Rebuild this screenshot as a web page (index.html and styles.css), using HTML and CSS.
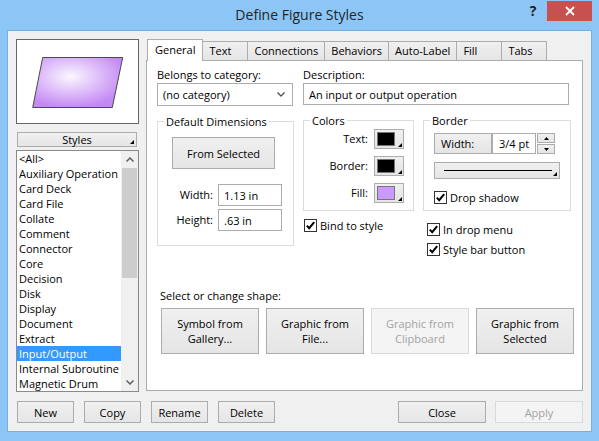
FILE: index.html
```html
<!DOCTYPE html>
<html lang="en">
<head>
    <meta charset="UTF-8">
    <title>Define Figure Styles</title>
    <link rel="stylesheet" href="styles.css">
</head>
<body>
<div class="window">
    <div class="titlebar">
        <span class="title">Define Figure Styles</span>
        <span class="help-btn">?</span>
        <span class="close-btn">
            <svg width="10" height="10" viewBox="0 0 10 10"><path d="M1 1 L9 9 M9 1 L1 9" stroke="#fff" stroke-width="1.8"/></svg>
        </span>
    </div>

    <div class="client">
        <div class="main">
            <!-- left column: preview + style list -->
            <div class="left-panel">
                <div class="preview">
                    <svg width="121" height="83" viewBox="0 0 121 83">
                        <defs>
                            <radialGradient id="io-fill" cx="0.42" cy="0.38" r="0.62">
                                <stop offset="0" stop-color="#fbf7ff"/>
                                <stop offset="1" stop-color="#c48af4"/>
                            </radialGradient>
                        </defs>
                        <polygon points="25.7,17.5 105.7,17.5 95.3,67.5 15.7,67.5" fill="url(#io-fill)" stroke="#4a4a4a" stroke-width="1"/>
                    </svg>
                </div>
                <div class="styles-btn">Styles<span class="corner"></span></div>
                <div class="style-list">
                    <ul class="items">
                        <li>&lt;All&gt;</li>
                        <li>Auxiliary Operation</li>
                        <li>Card Deck</li>
                        <li>Card File</li>
                        <li>Collate</li>
                        <li>Comment</li>
                        <li>Connector</li>
                        <li>Core</li>
                        <li>Decision</li>
                        <li>Disk</li>
                        <li>Display</li>
                        <li>Document</li>
                        <li>Extract</li>
                        <li class="selected">Input/Output</li>
                        <li>Internal Subroutine</li>
                        <li>Magnetic Drum</li>
                    </ul>
                    <div class="scrollbar">
                        <div class="arrow"><svg width="8" height="5" viewBox="0 0 8 5"><polyline points="0.5,4.5 4,1 7.5,4.5" fill="none" stroke="#606060" stroke-width="1.5"/></svg></div>
                        <div class="track"><div class="thumb"></div></div>
                        <div class="arrow"><svg width="8" height="5" viewBox="0 0 8 5"><polyline points="0.5,0.5 4,4 7.5,0.5" fill="none" stroke="#606060" stroke-width="1.5"/></svg></div>
                    </div>
                </div>
            </div>

            <!-- right column: tab control -->
            <div class="tabs">
                <div class="tab-strip">
                    <span class="tab active">General</span>
                    <span class="tab">Text</span>
                    <span class="tab">Connections</span>
                    <span class="tab">Behaviors</span>
                    <span class="tab">Auto-Label</span>
                    <span class="tab">Fill</span>
                    <span class="tab">Tabs</span>
                </div>
                <div class="tab-page">
                    <div class="field-row">
                        <div class="field cat">
                            <div class="field-label">Belongs to category:</div>
                            <div class="select">(no category)
                                <svg width="8" height="5" viewBox="0 0 8 5"><polyline points="0.5,0.5 4,4 7.5,0.5" fill="none" stroke="#555" stroke-width="1.4"/></svg>
                            </div>
                        </div>
                        <div class="field desc">
                            <div class="field-label">Description:</div>
                            <div class="text-input">An input or output operation</div>
                        </div>
                    </div>

                    <div class="groups-row">
                        <div class="col dims-col">
                            <div class="group dims">
                                <div class="group-title">Default Dimensions</div>
                                <div class="button from-selected">From Selected</div>
                                <div class="dim-grid">
                                    <span class="dim-label">Width:</span>
                                    <span class="text-input small">1.13 in</span>
                                    <span class="dim-label">Height:</span>
                                    <span class="text-input small">.63 in</span>
                                </div>
                            </div>
                        </div>

                        <div class="col colors-col">
                            <div class="group colors">
                                <div class="group-title">Colors</div>
                                <div class="color-grid">
                                    <span class="color-label">Text:</span>
                                    <span class="swatch-btn"><span class="swatch black"></span><span class="corner"></span></span>
                                    <span class="color-label">Border:</span>
                                    <span class="swatch-btn"><span class="swatch black"></span><span class="corner"></span></span>
                                    <span class="color-label">Fill:</span>
                                    <span class="swatch-btn"><span class="swatch lilac"></span><span class="corner"></span></span>
                                </div>
                            </div>
                            <label class="check bind">
                                <span class="box"><svg width="11" height="11" viewBox="0 0 11 11"><polyline points="1.8,5.6 4.2,8.2 9.2,2.2" fill="none" stroke="#000" stroke-width="2"/></svg></span>
                                Bind to style
                            </label>
                        </div>

                        <div class="col border-col">
                            <div class="group border">
                                <div class="group-title">Border</div>
                                <div class="width-row">
                                    <span class="button width-btn">Width:</span>
                                    <span class="text-input pt">3/4 pt</span>
                                    <span class="spinner">
                                        <span class="spin"><svg width="5" height="3" viewBox="0 0 5 3"><polygon points="0,3 2.5,0 5,3" fill="#000"/></svg></span>
                                        <span class="spin"><svg width="5" height="3" viewBox="0 0 5 3"><polygon points="0,0 2.5,3 5,0" fill="#000"/></svg></span>
                                    </span>
                                </div>
                                <div class="line-select"><span class="line"></span><span class="corner"></span></div>
                                <label class="check shadow">
                                    <span class="box"><svg width="11" height="11" viewBox="0 0 11 11"><polyline points="1.8,5.6 4.2,8.2 9.2,2.2" fill="none" stroke="#000" stroke-width="2"/></svg></span>
                                    Drop shadow
                                </label>
                            </div>
                            <label class="check menu">
                                <span class="box"><svg width="11" height="11" viewBox="0 0 11 11"><polyline points="1.8,5.6 4.2,8.2 9.2,2.2" fill="none" stroke="#000" stroke-width="2"/></svg></span>
                                In drop menu
                            </label>
                            <label class="check barbtn">
                                <span class="box"><svg width="11" height="11" viewBox="0 0 11 11"><polyline points="1.8,5.6 4.2,8.2 9.2,2.2" fill="none" stroke="#000" stroke-width="2"/></svg></span>
                                Style bar button
                            </label>
                        </div>
                    </div>

                    <div class="shape-label">Select or change shape:</div>
                    <div class="shape-buttons">
                        <span class="button shape-btn">Symbol from<br>Gallery...</span>
                        <span class="button shape-btn">Graphic from<br>File...</span>
                        <span class="button shape-btn disabled">Graphic from<br>Clipboard</span>
                        <span class="button shape-btn">Graphic from<br>Selected</span>
                    </div>
                </div>
            </div>
        </div>

        <div class="bottom-bar">
            <div class="btn-group left">
                <span class="button small-btn">New</span>
                <span class="button small-btn">Copy</span>
                <span class="button small-btn">Rename</span>
                <span class="button small-btn">Delete</span>
            </div>
            <div class="btn-group right">
                <span class="button wide-btn">Close</span>
                <span class="button wide-btn disabled">Apply</span>
            </div>
        </div>
    </div>
</div>
</body>
</html>
```

FILE: styles.css
```css
* {
    box-sizing: border-box;
}

body {
    margin: 0;
    font-family: "Open Sans", "Noto Sans", sans-serif;
    font-size: 11px;
    color: #000;
}

.window {
    width: 599px;
    height: 441px;
    background-color: #8cc6f6; /* win8 frame */
}

/* title bar */
.titlebar {
    height: 30px;
    display: flex;
    align-items: flex-start;
}

.title {
    flex: 1;
    padding-left: 79px;
    text-align: center;
    font-size: 14px;
    line-height: 30px;
    color: #252525;
}

.help-btn {
    width: 14px;
    margin: 1px 7px 0 6px;
    line-height: 20px;
    text-align: center;
    font-size: 14px;
    font-weight: bold;
    color: #1e1e1e;
}

.close-btn {
    width: 45px;
    height: 20px;
    margin: 1px 7px 0 0;
    background-color: #c75050;
    display: flex;
    align-items: center;
    justify-content: center;
}

/* client area */
.client {
    margin-left: 7px;
    width: 585px;
    height: 402px;
    background-color: #f0f0f0;
    border: 1px solid #78b0df;
    padding: 8px 8px 0 8px;
}

.main {
    display: flex;
    gap: 7px;
    height: 353px;
}

.left-panel {
    width: 123px;
}

.preview {
    height: 85px;
    border: 1px solid #666;
    background-color: #fff;
}

.preview svg {
    display: block;
}

.button {
    border: 1px solid #acacac;
    background: linear-gradient(#f0f0f0, #e5e5e5);
    display: flex;
    align-items: center;
    justify-content: center;
    text-align: center;
    line-height: 15px;
}

.button.disabled {
    border-color: #d9d9d9;
    background: #f4f4f4;
    color: #a3a3a3;
}

.styles-btn {
    position: relative;
    margin: 8px 0 0 1px;
    width: 120px;
    height: 15px;
    border: 1px solid #acacac;
    background: linear-gradient(#f0f0f0, #e5e5e5);
    text-align: center;
    line-height: 13px;
}

.corner {
    position: absolute;
    right: 2px;
    bottom: 2px;
    width: 0;
    height: 0;
    border-left: 4px solid transparent;
    border-bottom: 4px solid #000;
}

/* style list */
.style-list {
    margin-top: 3px;
    height: 242px;
    border: 1px solid #8a8a8a;
    background-color: #fff;
    display: flex;
}

.items {
    list-style: none;
    margin: 0;
    padding: 0;
    width: 104px;
}

.items li {
    height: 15px;
    line-height: 15px;
    padding-left: 2px;
    white-space: nowrap;
    overflow: hidden;
}

.items li.selected {
    background-color: #3399ff;
    color: #fff;
}

.scrollbar {
    width: 17px;
    background-color: #f0f0f0;
    display: flex;
    flex-direction: column;
}

.scrollbar .arrow {
    height: 17px;
    display: flex;
    align-items: center;
    justify-content: center;
}

.scrollbar .track {
    flex: 1;
    padding: 0 1px;
}

.thumb {
    height: 110px;
    background-color: #cdcdcd;
}

/* tab control */
.tabs {
    width: 437px;
}

.tab-strip {
    height: 21px;
    display: flex;
    align-items: flex-end;
    padding-left: 1px;
}

.tab {
    min-width: 46px;
    height: 19px;
    padding: 0 6px;
    margin-left: -1px;
    border: 1px solid #acacac;
    border-bottom: none;
    background: linear-gradient(#f0f0f0, #e5e5e5);
    line-height: 17px;
    white-space: nowrap;
}

.tab:first-child {
    margin-left: 0;
}

.tab.active {
    position: relative;
    z-index: 1;
    height: 22px;
    margin-bottom: -1px;
    padding: 0 7px;
    background: #fff;
    line-height: 19px;
}

.tab-page {
    height: 331px;
    border: 1px solid #acacac;
    background-color: #fff;
    padding: 6px 0 0 10px;
}

.field-row {
    display: flex;
    gap: 10px;
}

.cat {
    width: 136px;
}

.desc {
    width: 266px;
}

.field-label {
    line-height: 15px;
    margin-bottom: 1px;
}

.select {
    height: 23px;
    border: 1px solid #acacac;
    padding: 0 7px 0 5px;
    display: flex;
    align-items: center;
    justify-content: space-between;
}

.text-input {
    height: 22px;
    border: 1px solid #acacac;
    background-color: #fff;
    padding-left: 5px;
    display: flex;
    align-items: center;
    white-space: nowrap;
}

/* group boxes */
.groups-row {
    display: flex;
    gap: 9px;
    margin-top: 7px;
    align-items: flex-start;
}

.group {
    border: 1px solid #dcdcdc;
    margin-top: 7px;
}

.group-title {
    width: fit-content;
    margin: -8px 0 0 6px;
    padding: 0 2px;
    background-color: #fff;
    line-height: 15px;
}

.dims {
    width: 137px;
    height: 125px;
    margin-top: 8px;
}

.from-selected {
    width: 103px;
    height: 32px;
    margin: 8px 0 0 14px;
}

.dim-grid {
    display: grid;
    grid-template-columns: 55px 64px;
    column-gap: 5px;
    row-gap: 3px;
    margin-top: 15px;
}

.dim-label {
    text-align: right;
    line-height: 22px;
}

.colors {
    width: 111px;
    height: 91px;
}

.color-grid {
    display: grid;
    grid-template-columns: 64px 30px;
    column-gap: 6px;
    row-gap: 7px;
    margin-top: 1px;
}

.color-label {
    text-align: right;
    line-height: 20px;
}

.swatch-btn {
    position: relative;
    height: 20px;
    border: 1px solid #acacac;
    background: linear-gradient(#f0f0f0, #e5e5e5);
    padding: 2px 0 0 2px;
}

.swatch-btn .corner {
    right: 1px;
    bottom: 1px;
}

.swatch {
    display: block;
    width: 18px;
    height: 14px;
    border: 1px solid #777;
}

.swatch.black {
    background-color: #000;
}

.swatch.lilac {
    background-color: #cc99ff;
}

.border {
    width: 148px;
    height: 91px;
}

.width-row {
    display: flex;
    margin: 5px 0 0 10px;
}

.width-btn {
    width: 58px;
    height: 21px;
    justify-content: flex-start;
    padding-left: 6px;
}

.pt {
    width: 44px;
    height: 21px;
    padding-left: 6px;
}

.spinner {
    width: 18px;
    height: 21px;
    margin-left: 1px;
    display: flex;
    flex-direction: column;
    gap: 1px;
}

.spin {
    flex: 1;
    border: 1px solid #acacac;
    background: linear-gradient(#f0f0f0, #e5e5e5);
    display: flex;
    align-items: center;
    justify-content: center;
}

.line-select {
    position: relative;
    width: 126px;
    height: 17px;
    margin: 8px 0 0 10px;
    border: 1px solid #acacac;
    background: linear-gradient(#f0f0f0, #e5e5e5);
    display: flex;
    align-items: center;
    padding: 0 7px 0 9px;
}

.line-select .line {
    flex: 1;
    height: 1px;
    background-color: #000;
}

/* checkboxes */
.check {
    display: flex;
    align-items: center;
    gap: 3px;
    line-height: 13px;
    white-space: nowrap;
}

.box {
    width: 13px;
    height: 13px;
    border: 1px solid #333;
    background-color: #fff;
    display: flex;
    align-items: center;
    justify-content: center;
}

.check.shadow {
    margin: 12px 0 0 10px;
}

.check.bind {
    margin: 8px 0 0 1px;
}

.check.menu {
    margin: 12px 0 0 4px;
}

.check.barbtn {
    margin: 7px 0 0 4px;
}

/* shape buttons */
.shape-label {
    margin: 32px 0 0 3px;
    line-height: 15px;
}

.shape-buttons {
    display: flex;
    gap: 7px;
    margin: 5px 0 0 4px;
}

.shape-btn {
    width: 98px;
    height: 46px;
}

/* bottom buttons */
.bottom-bar {
    display: flex;
    justify-content: space-between;
    margin-top: 9px;
    padding-left: 1px;
}

.btn-group {
    display: flex;
}

.btn-group.left {
    gap: 10px;
}

.btn-group.right {
    gap: 9px;
}

.small-btn {
    width: 57px;
    height: 22px;
}

.wide-btn {
    width: 88px;
    height: 22px;
}
```
